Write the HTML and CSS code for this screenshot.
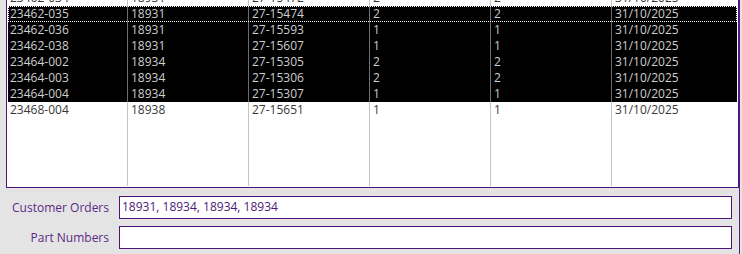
FILE: index.html
```html
<!DOCTYPE html>
<html lang="en">
<head>
    <meta charset="UTF-8">
    <title>Order Lines</title>
    <link rel="stylesheet" href="styles.css">
</head>
<body>
    <div class="form">
        <div class="list">
            <div class="rows">
                <div class="row first">
                    <span class="cell">23462-034</span><span class="cell">18931</span><span class="cell">27-15472</span><span class="cell">2</span><span class="cell">2</span><span class="cell">31/10/2025</span>
                </div>
                <div class="row selected focus">
                    <span class="cell">23462-035</span><span class="cell">18931</span><span class="cell">27-15474</span><span class="cell">2</span><span class="cell">2</span><span class="cell">31/10/2025</span>
                </div>
                <div class="row selected">
                    <span class="cell">23462-036</span><span class="cell">18931</span><span class="cell">27-15593</span><span class="cell">1</span><span class="cell">1</span><span class="cell">31/10/2025</span>
                </div>
                <div class="row selected">
                    <span class="cell">23462-038</span><span class="cell">18931</span><span class="cell">27-15607</span><span class="cell">1</span><span class="cell">1</span><span class="cell">31/10/2025</span>
                </div>
                <div class="row selected">
                    <span class="cell">23464-002</span><span class="cell">18934</span><span class="cell">27-15305</span><span class="cell">2</span><span class="cell">2</span><span class="cell">31/10/2025</span>
                </div>
                <div class="row selected">
                    <span class="cell">23464-003</span><span class="cell">18934</span><span class="cell">27-15306</span><span class="cell">2</span><span class="cell">2</span><span class="cell">31/10/2025</span>
                </div>
                <div class="row selected">
                    <span class="cell">23464-004</span><span class="cell">18934</span><span class="cell">27-15307</span><span class="cell">1</span><span class="cell">1</span><span class="cell">31/10/2025</span>
                </div>
                <div class="row">
                    <span class="cell">23468-004</span><span class="cell">18938</span><span class="cell">27-15651</span><span class="cell">1</span><span class="cell">1</span><span class="cell">31/10/2025</span>
                </div>
                <div class="row filler">
                    <span class="cell"></span><span class="cell"></span><span class="cell"></span><span class="cell"></span><span class="cell"></span><span class="cell"></span>
                </div>
            </div>
        </div>

        <div class="field first-field">
            <label class="field-label">Customer Orders</label>
            <div class="field-box">18931, 18934, 18934, 18934</div>
        </div>
        <div class="field">
            <label class="field-label">Part Numbers</label>
            <div class="field-box"></div>
        </div>
    </div>
</body>
</html>
```

FILE: styles.css
```css
html, body {
    margin: 0;
    padding: 0;
    height: 100%;
    background-color: #e4e4e4;
}
body {
    font-family: 'Open Sans', 'Liberation Sans', sans-serif;
    font-size: 12px;
    color: #383838;
    overflow: hidden;
}
.form {
    width: 733px;
    height: 254px;
    padding-left: 6px;
    border-right: 1px solid #5a1a86;
}
.list {
    height: 186px;
    background-color: #fff;
    border: 1px solid #4e1478;
    border-top: none;
    padding: 0 1px 1px 1px;
    overflow: hidden;
}
.rows {
    display: flex;
    flex-direction: column;
    height: 100%;
}
.row {
    display: grid;
    grid-template-columns: 119px 121px 121px 121px 121px 1fr;
    height: 16px;
    line-height: 16px;
    flex: none;
}
.row.first {
    margin-top: -10px;
}
.cell {
    padding-left: 3px;
    border-left: 1px solid #c4c4c4;
    white-space: nowrap;
    overflow: hidden;
}
.cell:first-child {
    border-left: none;
    padding-left: 2px;
}
.row.selected {
    background-color: #000;
    color: #cfcfcf;
}
.row.selected .cell {
    border-left-color: #6c6c6c;
}
.row.selected .cell:first-child {
    border-left: none;
}
.row.focus {
    outline: 1px dotted #fff;
    outline-offset: -1px;
}
.row.filler {
    flex: 1;
    height: auto;
}
.field {
    display: flex;
    align-items: center;
    margin-top: 7px;
    height: 23px;
}
.first-field {
    margin-top: 8px;
}
.field-label {
    width: 103px;
    text-align: right;
    color: #5b2a86;
    padding-right: 10px;
}
.field-box {
    width: 609px;
    height: 21px;
    line-height: 20px;
    padding-left: 2px;
    background-color: #fff;
    border: 1px solid #4e1478;
    color: #4e1a78;
}
```
